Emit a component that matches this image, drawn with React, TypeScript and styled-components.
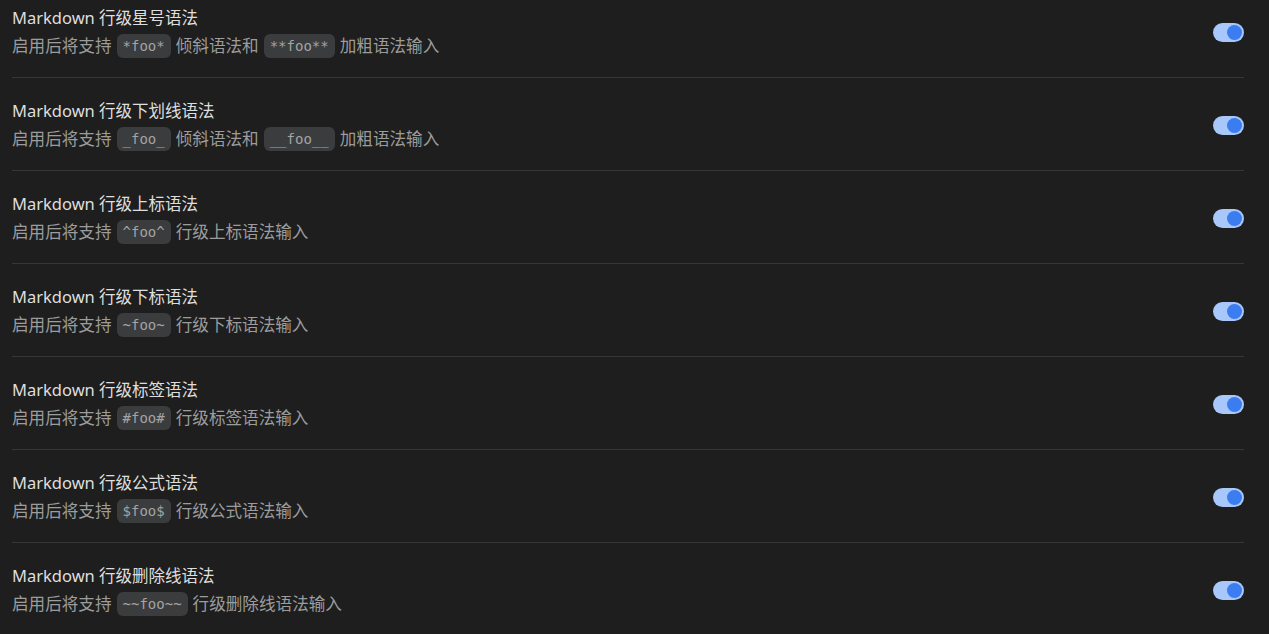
import React, {useState} from "react"
import styled, {createGlobalStyle} from 'styled-components'

const GlobalStyle = createGlobalStyle`
  html, body {
    margin: 0;
    padding: 0;
    background: #1e1e1e;
    overflow: hidden;
  }
  body {
    font-family: "Segoe UI", "Noto Sans", "Noto Sans CJK SC", sans-serif;
  }
`;

const Page = styled.div`
  height: 634px;
  overflow: hidden;
  padding: 0 25px 0 12px;
`;

// list is scrolled a little, first row is cut at the top
const List = styled.div`
  margin-top: -15px;
`;

const Row = styled.div`
  display: flex;
  align-items: center;
  justify-content: space-between;
  height: 93px;
  box-sizing: border-box;
  padding-top: 2px;
  border-bottom: 1px solid #363636;
`;

const Info = styled.div`
  display: flex;
  flex-direction: column;
  gap: 4px;
`;

const Title = styled.div`
  font-size: 16.5px;
  line-height: 24px;
  color: #dedede;
`;

const Desc = styled.div`
  font-size: 16.6px;
  line-height: 24px;
  color: #9c9c9c;
  display: flex;
  align-items: center;
  white-space: pre;
`;

const Code = styled.code`
  font-family: "DejaVu Sans Mono", "Liberation Mono", monospace;
  font-size: 14px;
  line-height: 24px;
  height: 24px;
  padding: 0 6px;
  margin: 0 5px;
  border-radius: 6px;
  background: #3b3c3e;
  color: #a4a4a4;
`;

const Track = styled.button<{ $on: boolean }>`
  width: 31px;
  height: 19px;
  border: none;
  padding: 0 2px;
  border-radius: 10px;
  background: ${p => p.$on ? '#a8c7fa' : '#555'};
  display: flex;
  align-items: center;
  justify-content: ${p => p.$on ? 'flex-end' : 'flex-start'};
  cursor: pointer;
  flex-shrink: 0;
`;

const Knob = styled.span<{ $on: boolean }>`
  width: 15px;
  height: 15px;
  border-radius: 50%;
  background: ${p => p.$on ? '#3b7cf0' : '#bbb'};
`;

interface RowItem {
    title: string,
    before: string,
    code: string,
    after: string,
    code2?: string,
    after2?: string
}

const items: Array<RowItem> = [
    {title: "Markdown 行级星号语法", before: "启用后将支持", code: "*foo*", after: "倾斜语法和", code2: "**foo**", after2: "加粗语法输入"},
    {title: "Markdown 行级下划线语法", before: "启用后将支持", code: "_foo_", after: "倾斜语法和", code2: "__foo__", after2: "加粗语法输入"},
    {title: "Markdown 行级上标语法", before: "启用后将支持", code: "^foo^", after: "行级上标语法输入"},
    {title: "Markdown 行级下标语法", before: "启用后将支持", code: "~foo~", after: "行级下标语法输入"},
    {title: "Markdown 行级标签语法", before: "启用后将支持", code: "#foo#", after: "行级标签语法输入"},
    {title: "Markdown 行级公式语法", before: "启用后将支持", code: "$foo$", after: "行级公式语法输入"},
    {title: "Markdown 行级删除线语法", before: "启用后将支持", code: "~~foo~~", after: "行级删除线语法输入"},
];

const Toggle = () => {
    const [on, setOn] = useState(true);
    return (
        <Track $on={on} onClick={() => setOn(!on)}>
            <Knob $on={on}/>
        </Track>
    )
};

const App = () => {
    return (
        <Page>
            <GlobalStyle/>
            <List>
                {items.map((item, index) => (
                    <Row key={`row-${index}`}>
                        <Info>
                            <Title>{item.title}</Title>
                            <Desc>
                                {item.before}
                                <Code>{item.code}</Code>
                                {item.after}
                                {item.code2 && <Code>{item.code2}</Code>}
                                {item.after2}
                            </Desc>
                        </Info>
                        <Toggle/>
                    </Row>
                ))}
            </List>
        </Page>
    )
};

export default App
